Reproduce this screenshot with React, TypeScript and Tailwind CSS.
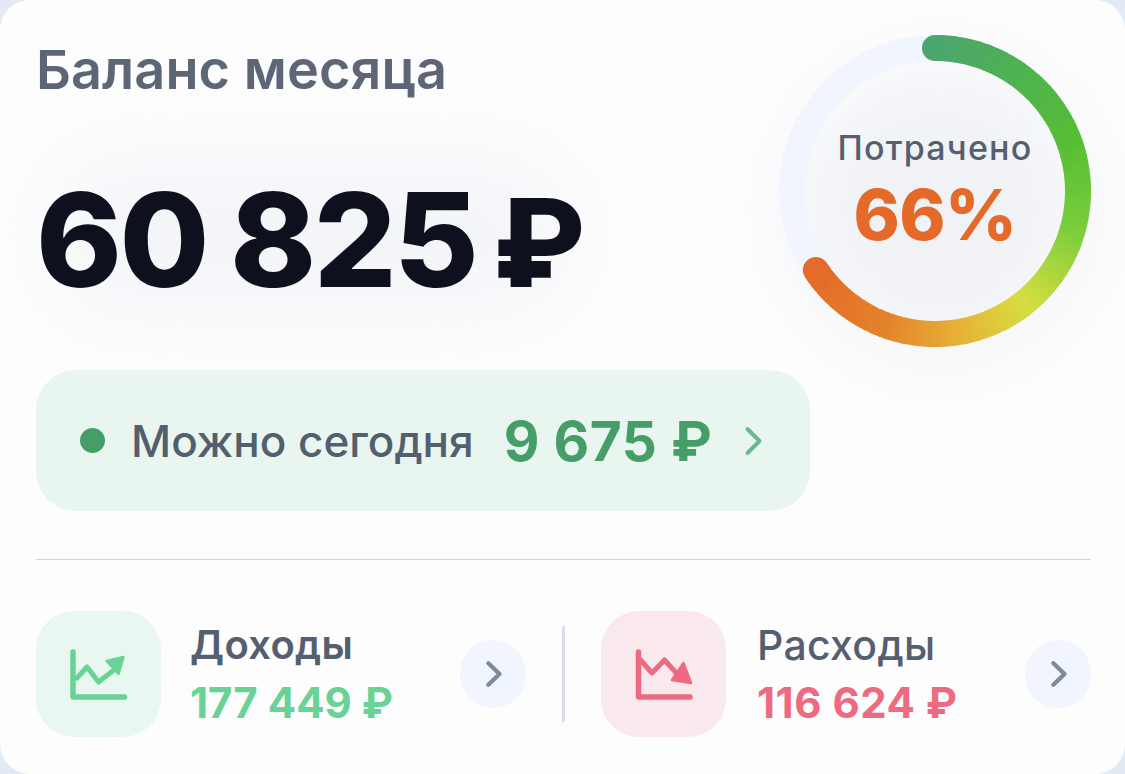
import React from "react";

const font = { fontFamily: '"Inter", "Noto Sans", sans-serif' };

// Colour stops for the spending ring, by fraction of the drawn arc.
const stops: [number, number[]][] = [
  [0, [76, 166, 112]],
  [0.15, [78, 178, 80]],
  [0.3, [86, 190, 52]],
  [0.45, [124, 206, 60]],
  [0.6, [216, 222, 64]],
  [0.72, [230, 178, 54]],
  [0.85, [228, 130, 42]],
  [1, [229, 106, 42]],
];

function colorAt(t: number) {
  for (let i = 1; i < stops.length; i++) {
    if (t <= stops[i][0]) {
      const [a, ca] = stops[i - 1];
      const [b, cb] = stops[i];
      const k = (t - a) / (b - a);
      const c = ca.map((v, j) => Math.round(v + (cb[j] - v) * k));
      return `rgb(${c[0]},${c[1]},${c[2]})`;
    }
  }
  return "rgb(229,106,42)";
}

function Ring({ percent }: { percent: number }) {
  const r = 143;
  const cx = 156;
  const cy = 156;
  const sweep = (percent / 100) * 360;
  const count = 120;
  const pt = (deg: number) => {
    const a = (deg * Math.PI) / 180;
    return [cx + r * Math.sin(a), cy - r * Math.cos(a)];
  };
  const segs = Array.from({ length: count }, (_, i) => {
    const [x1, y1] = pt((i / count) * sweep);
    const [x2, y2] = pt(((i + 1) / count) * sweep + 0.3);
    return (
      <path
        key={i}
        d={`M${x1} ${y1}A${r} ${r} 0 0 1 ${x2} ${y2}`}
        stroke={colorAt((i + 0.5) / count)}
        strokeWidth={26}
        fill="none"
        strokeLinecap={i === 0 || i === count - 1 ? "round" : "butt"}
      />
    );
  });
  return (
    <svg width={312} height={312} viewBox="0 0 312 312" className="absolute inset-0">
      <circle cx={cx} cy={cy} r={r} stroke="#f1f5fd" strokeWidth={26} fill="none" />
      {segs}
    </svg>
  );
}

function Chevron({ color, size, stroke, d }: { color: string; size: number; stroke: number; d: string }) {
  return (
    <svg width={size} height={size} viewBox="0 0 30 30" fill="none">
      <path d={d} stroke={color} strokeWidth={stroke} strokeLinecap="round" strokeLinejoin="round" />
    </svg>
  );
}

function IncomeIcon() {
  return (
    <svg width={58} height={52} viewBox="0 0 58 52" fill="none" className="overflow-visible">
      <path d="M3 4V49H54.5" stroke="#69d295" strokeWidth={5.5} strokeLinecap="round" strokeLinejoin="round" />
      <path d="M7 30 17 19 28.5 34 44 22" stroke="#69d295" strokeWidth={5} strokeLinecap="round" strokeLinejoin="round" />
      <path d="M36.5 13 53.5 9 48.5 26Z" fill="#69d295" stroke="#69d295" strokeWidth={2.5} strokeLinejoin="round" />
    </svg>
  );
}

function ExpenseIcon() {
  return (
    <svg width={58} height={52} viewBox="0 0 58 52" fill="none" className="overflow-visible">
      <path d="M3.5 4V49H55" stroke="#ee6a80" strokeWidth={5.5} strokeLinecap="round" strokeLinejoin="round" />
      <path d="M5.5 12 17 25 29.5 12 45 29" stroke="#ee6a80" strokeWidth={5} strokeLinecap="round" strokeLinejoin="round" />
      <path d="M37 32 56 35 48.5 15Z" fill="#ee6a80" stroke="#ee6a80" strokeWidth={2.5} strokeLinejoin="round" />
    </svg>
  );
}

function Stat({
  icon,
  tile,
  label,
  labelClass,
  value,
  valueClass,
  textClass,
}: {
  icon: React.ReactNode;
  tile: string;
  label: string;
  labelClass: string;
  value: string;
  valueClass: string;
  textClass: string;
}) {
  return (
    <div className="flex shrink-0 items-center">
      <div className={`flex h-[126px] w-[125px] shrink-0 items-center justify-center rounded-[38px] ${tile}`}>{icon}</div>
      <div className={`flex shrink-0 flex-col ${textClass}`}>
        <div className={`text-[#555f70] leading-[46px] ${labelClass}`}>{label}</div>
        <div className={`mt-[12px] leading-[46px] font-bold ${valueClass}`}>{value}</div>
      </div>
    </div>
  );
}

function RoundChevron() {
  return (
    <div className="flex h-[68px] w-[66px] shrink-0 items-center justify-center rounded-full bg-[#f1f5fd]">
      <Chevron color="#7f8a9f" size={28} stroke={4.6} d="M10 3.5 22 15 10 26.5" />
    </div>
  );
}

export default function App() {
  return (
    <div className="h-[774px] w-[1125px] overflow-hidden bg-[#e4eaf3]" style={font}>
      <div className="relative h-[774px] w-[1125px] overflow-hidden rounded-[30px] bg-[#fdfdfe] px-[36px]">
        {/* Soft haze behind the headline figures */}
        <div className="absolute left-[60px] top-[170px] h-[130px] w-[500px] rounded-full bg-[#f3f4f8] blur-[40px]" />
        <div className="absolute left-[800px] top-[70px] h-[280px] w-[280px] rounded-full bg-[#f0f2f6] blur-[36px]" />

        <div className="relative flex h-[370px] justify-between">
          <div>
            <div className="pt-[38px] text-[54px] leading-[64px] font-semibold tracking-[0.1px] text-[#5c6676]">Баланс месяца</div>
            <div className="mt-[64px] text-[130px] leading-[148px] font-extrabold tracking-[-2.5px] [word-spacing:-3px] whitespace-nowrap text-[#0c111d]">
              60 825<span className="ml-[-5px] text-[122px]"> ₽</span>
            </div>
          </div>
          <div className="relative mt-[35px] mr-[-2px] h-[312px] w-[312px] shrink-0">
            <Ring percent={65.6} />
            <div className="absolute inset-0 flex flex-col items-center pt-[93px]">
              <div className="text-[34px] leading-[40px] font-medium tracking-[1.2px] text-[#555f70]">Потрачено</div>
              <div className="mt-[7px] text-[70px] leading-[80px] font-extrabold tracking-[-0.5px] text-[#e56a2a]">66%</div>
            </div>
          </div>
        </div>

        <div className="relative flex h-[141px] w-[774px] items-center rounded-[40px] bg-[#e9f6f0] pl-[44px]">
          <div className="h-[25px] w-[25px] shrink-0 rounded-full bg-[#459e67]" />
          <div className="ml-[26px] text-[44px] leading-[52px] font-medium text-[#535e6f]">Можно сегодня</div>
          <div className="ml-[30px] text-[55px] leading-[60px] font-bold tracking-[0.5px] text-[#459e67]">9 675 ₽</div>
          <div className="ml-[27px]">
            <Chevron color="#69b88e" size={30} stroke={4} d="M8.5 3 20.5 15 8.5 27" />
          </div>
        </div>

        <div className="relative mt-[48px] h-px w-[1055px] bg-[#cfd5de]" />

        <div className="relative mt-[51px] flex items-center">
          <Stat
            icon={<IncomeIcon />}
            tile="bg-[#e8f7f0]"
            label="Доходы"
            labelClass="text-[40px] font-semibold tracking-[0.3px]"
            value="177 449 ₽"
            valueClass="text-[42px] text-[#69d295]"
            textClass="ml-[29px] w-[270px]"
          />
          <RoundChevron />
          <div className="mx-[36px] h-[96px] w-[3px] shrink-0 bg-[#d8dfe9]" />
          <Stat
            icon={<ExpenseIcon />}
            tile="bg-[#f9e8ec]"
            label="Расходы"
            labelClass="text-[41px] font-medium tracking-[0.3px]"
            value="116 624 ₽"
            valueClass="text-[42px] tracking-[0.5px] text-[#ee6a80]"
            textClass="ml-[31px] w-[268px]"
          />
          <RoundChevron />
        </div>
      </div>
    </div>
  );
}
